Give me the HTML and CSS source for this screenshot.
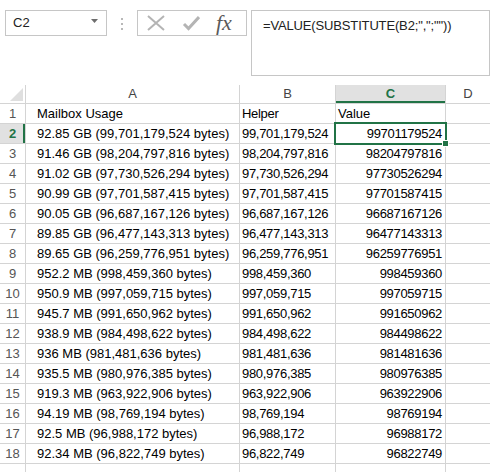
FILE: index.html
```html
<!DOCTYPE html>
<html lang="en">
<head>
  <meta charset="UTF-8">
  <meta name="viewport" content="width=device-width, initial-scale=1.0">
  <title>Mailbox Usage - Excel</title>
  <link rel="stylesheet" href="styles.css">
</head>
<body>
  <div class="formula-bar">
    <div class="name-box">
      <span>C2</span>
      <svg class="arrow" width="7" height="4" viewBox="0 0 7 4"><path d="M0 0h7L3.5 4z" fill="#6d6d6d"/></svg>
    </div>
    <div class="grip"><i></i><i></i><i></i></div>
    <div class="fx-buttons">
      <svg width="18" height="16" viewBox="0 0 18 16"><path d="M1 1l16 14M17 1L1 15" stroke="#b4b4b4" stroke-width="2" fill="none"/></svg>
      <svg width="18" height="16" viewBox="0 0 18 16"><path d="M2 9l4.5 4.5L17 2" stroke="#b4b4b4" stroke-width="3" fill="none"/></svg>
      <span class="fx">fx</span>
    </div>
    <div class="formula">=VALUE(SUBSTITUTE(B2;",";""))</div>
  </div>

  <div class="sheet">
    <div class="hd corner"></div>
    <div class="hd col">A</div>
    <div class="hd col">B</div>
    <div class="hd col active">C</div>
    <div class="hd col">D</div>

    <div class="rn">1</div><div class="c a">Mailbox Usage</div><div class="c b">Helper</div><div class="c">Value</div><div class="c"></div>
    <div class="rn active">2</div><div class="c a">92.85 GB (99,701,179,524 bytes)</div><div class="c b">99,701,179,524</div><div class="c n selected">99701179524</div><div class="c"></div>
    <div class="rn">3</div><div class="c a">91.46 GB (98,204,797,816 bytes)</div><div class="c b">98,204,797,816</div><div class="c n">98204797816</div><div class="c"></div>
    <div class="rn">4</div><div class="c a">91.02 GB (97,730,526,294 bytes)</div><div class="c b">97,730,526,294</div><div class="c n">97730526294</div><div class="c"></div>
    <div class="rn">5</div><div class="c a">90.99 GB (97,701,587,415 bytes)</div><div class="c b">97,701,587,415</div><div class="c n">97701587415</div><div class="c"></div>
    <div class="rn">6</div><div class="c a">90.05 GB (96,687,167,126 bytes)</div><div class="c b">96,687,167,126</div><div class="c n">96687167126</div><div class="c"></div>
    <div class="rn">7</div><div class="c a">89.85 GB (96,477,143,313 bytes)</div><div class="c b">96,477,143,313</div><div class="c n">96477143313</div><div class="c"></div>
    <div class="rn">8</div><div class="c a">89.65 GB (96,259,776,951 bytes)</div><div class="c b">96,259,776,951</div><div class="c n">96259776951</div><div class="c"></div>
    <div class="rn">9</div><div class="c a">952.2 MB (998,459,360 bytes)</div><div class="c b">998,459,360</div><div class="c n">998459360</div><div class="c"></div>
    <div class="rn">10</div><div class="c a">950.9 MB (997,059,715 bytes)</div><div class="c b">997,059,715</div><div class="c n">997059715</div><div class="c"></div>
    <div class="rn">11</div><div class="c a">945.7 MB (991,650,962 bytes)</div><div class="c b">991,650,962</div><div class="c n">991650962</div><div class="c"></div>
    <div class="rn">12</div><div class="c a">938.9 MB (984,498,622 bytes)</div><div class="c b">984,498,622</div><div class="c n">984498622</div><div class="c"></div>
    <div class="rn">13</div><div class="c a">936 MB (981,481,636 bytes)</div><div class="c b">981,481,636</div><div class="c n">981481636</div><div class="c"></div>
    <div class="rn">14</div><div class="c a">935.5 MB (980,976,385 bytes)</div><div class="c b">980,976,385</div><div class="c n">980976385</div><div class="c"></div>
    <div class="rn">15</div><div class="c a">919.3 MB (963,922,906 bytes)</div><div class="c b">963,922,906</div><div class="c n">963922906</div><div class="c"></div>
    <div class="rn">16</div><div class="c a">94.19 MB (98,769,194 bytes)</div><div class="c b">98,769,194</div><div class="c n">98769194</div><div class="c"></div>
    <div class="rn">17</div><div class="c a">92.5 MB (96,988,172 bytes)</div><div class="c b">96,988,172</div><div class="c n">96988172</div><div class="c"></div>
    <div class="rn">18</div><div class="c a">92.34 MB (96,822,749 bytes)</div><div class="c b">96,822,749</div><div class="c n">96822749</div><div class="c"></div>
    <div class="rn"></div><div class="c"></div><div class="c"></div><div class="c"></div><div class="c"></div>
  </div>
</body>
</html>
```

FILE: styles.css
```css
body {
  margin: 0;
  padding: 0;
  width: 490px;
  height: 472px;
  overflow: hidden;
  background-color: #fff;
  font-family: "Liberation Sans", Arial, sans-serif;
  font-size: 13px;
  color: #000;
}
.formula-bar {
  display: flex;
  align-items: flex-start;
  padding: 10px 0 0 5px;
  height: 65px;
}
.name-box {
  display: flex;
  align-items: center;
  justify-content: space-between;
  box-sizing: border-box;
  width: 102px;
  height: 26px;
  padding: 0 8px 2px 7px;
  border: 1px solid #c6c6c6;
  color: #222;
}
.name-box .arrow {
  margin-top: -2px;
}
.grip {
  display: flex;
  flex-direction: column;
  gap: 3px;
  margin: 8px 14px 0 14px;
}
.grip i {
  display: block;
  width: 2px;
  height: 2px;
  background-color: #b8b8b8;
}
.fx-buttons {
  display: flex;
  align-items: center;
  gap: 17px;
  box-sizing: border-box;
  width: 110px;
  height: 26px;
  padding: 0 0 0 9px;
  border: 1px solid #c6c6c6;
}
.fx {
  font-family: "Liberation Serif", "Times New Roman", serif;
  font-style: italic;
  font-size: 22px;
  line-height: 22px;
  color: #5a5a5a;
  margin-left: -1px;
}
.formula {
  flex: 1;
  box-sizing: border-box;
  height: 66px;
  margin-left: 4px;
  padding: 7px 0 0 11px;
  border: 1px solid #c6c6c6;
  color: #222;
  letter-spacing: -0.15px;
}
.sheet {
  display: grid;
  grid-template-columns: 25px 213px 95px 109px 1fr;
  grid-template-rows: 18px;
  grid-auto-rows: 19px;
  gap: 1px;
  margin-top: 10px;
  background-color: #d4d4d4;
}
.hd {
  background-color: #fff;
  color: #444;
  text-align: center;
  line-height: 18px;
}
.corner {
  position: relative;
}
.corner::after {
  content: "";
  position: absolute;
  right: 2px;
  bottom: 2px;
  border-left: 13px solid transparent;
  border-bottom: 13px solid #dfdfdf;
}
.hd.active {
  background-color: #e1e1e1;
  color: #217346;
  font-weight: bold;
  box-shadow: inset 0 -2px 0 #217346;
}
.rn {
  background-color: #fff;
  color: #555;
  text-align: center;
  line-height: 20px;
}
.rn.active {
  background-color: #e1e1e1;
  color: #217346;
  font-weight: bold;
  box-shadow: inset -2px 0 0 #217346;
}
.c {
  background-color: #fff;
  padding: 0 2px;
  line-height: 19px;
  white-space: nowrap;
}
.c.a {
  padding-left: 11px;
}
.c.b {
  letter-spacing: -0.3px;
}
.c.n {
  text-align: right;
  padding-right: 3px;
  letter-spacing: -0.3px;
}
.selected {
  position: relative;
  outline: 2px solid #217346;
  outline-offset: 0;
  z-index: 1;
}
.selected::after {
  content: "";
  position: absolute;
  right: -4px;
  bottom: -4px;
  width: 5px;
  height: 5px;
  background-color: #217346;
  border: 1px solid #fff;
}
```
